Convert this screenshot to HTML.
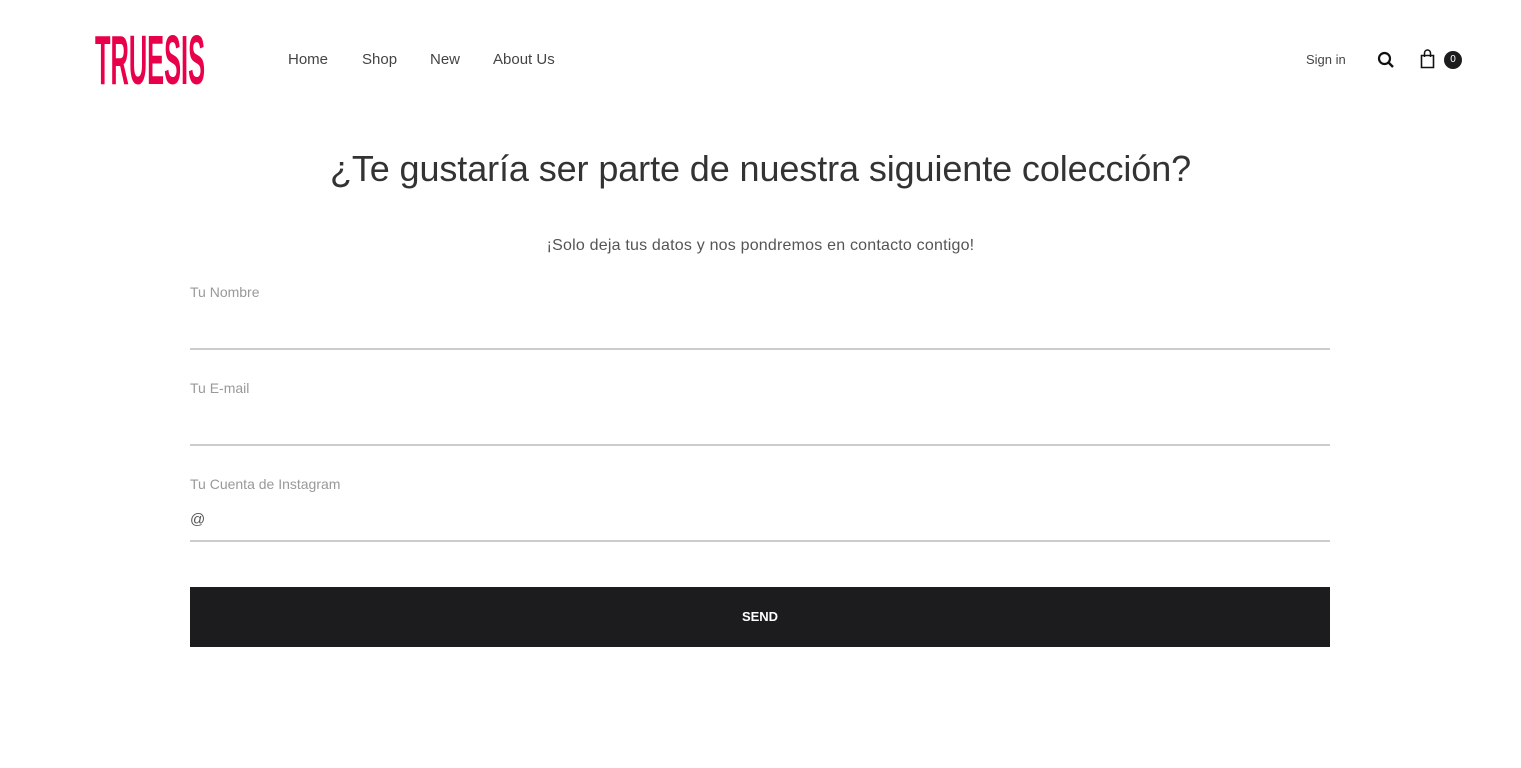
<!DOCTYPE html>
<html><head><meta charset="utf-8"><style>
body{margin:0;width:1521px;height:768px;background:#fff;font-family:"Liberation Sans",sans-serif;position:relative;overflow:hidden;color:#333}
.a{position:absolute}
nav a{position:absolute;top:51px;font-size:15px;color:#444;text-decoration:none}
.lbl{position:absolute;left:190px;font-size:14px;color:#999}
.line{position:absolute;left:190px;width:1140px;height:2px;background:#ccc}
</style></head><body>
<svg class="a" style="left:95px;top:33px" width="112" height="53">
<text x="0" y="51" font-family="Liberation Sans Narrow,Liberation Sans,sans-serif" font-weight="bold" font-size="70" fill="#e8004a" textLength="110" lengthAdjust="spacingAndGlyphs">TRUESIS</text></svg>
<nav><a style="left:288px">Home</a><a style="left:362px">Shop</a><a style="left:430px">New</a><a style="left:493px">About Us</a></nav>
<div class="a" style="left:1306px;top:52px;font-size:13px;color:#444">Sign in</div>
<svg class="a" style="left:1377px;top:51px" width="18" height="18"><circle cx="7.5" cy="7.5" r="5.5" fill="none" stroke="#111" stroke-width="2.2"/><path d="M11.5 11.5L16 16" stroke="#111" stroke-width="2.4"/></svg>
<svg class="a" style="left:1420px;top:49px" width="16" height="20"><path d="M1.5 6.5h12v12h-12z" fill="none" stroke="#111" stroke-width="1.6"/><path d="M4.5 8V4a3 3 0 0 1 6 0v4" fill="none" stroke="#111" stroke-width="1.5"/></svg>
<div class="a" style="left:1444px;top:51px;width:18px;height:18px;border-radius:9px;background:#1c1c1e;color:#fff;font-size:10px;text-align:center;line-height:18px">0</div>
<div class="a" style="left:0;width:1521px;top:148px;text-align:center;font-size:36px;color:#333;letter-spacing:-0.1px">¿Te gustaría ser parte de nuestra siguiente colección?</div>
<div class="a" style="left:0;width:1521px;top:237px;text-align:center;font-size:16px;color:#555;letter-spacing:0.2px">¡Solo deja tus datos y nos pondremos en contacto contigo!</div>
<div class="lbl" style="top:284px">Tu Nombre</div><div class="line" style="top:348px"></div>
<div class="lbl" style="top:380px">Tu E-mail</div><div class="line" style="top:444px"></div>
<div class="lbl" style="top:476px">Tu Cuenta de Instagram</div>
<div class="a" style="left:190px;top:511px;font-size:15px;color:#555">@</div>
<div class="line" style="top:540px"></div>
<div class="a" style="left:190px;top:587px;width:1140px;height:60px;background:#1c1c1e;color:#fff;font-weight:bold;font-size:13px;text-align:center;line-height:60px">SEND</div>
</body></html>
